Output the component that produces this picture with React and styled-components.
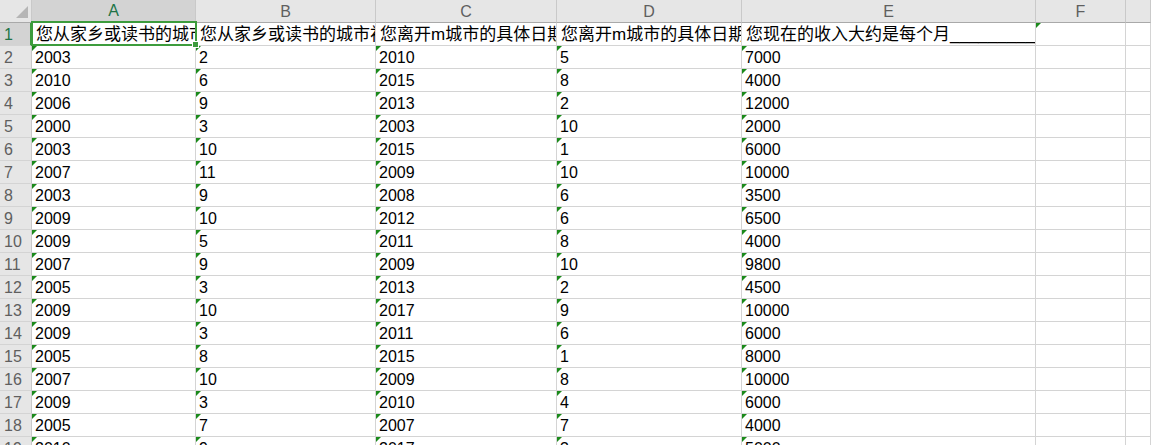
import React from 'react';
import styled, { createGlobalStyle } from 'styled-components';

const GlobalStyle = createGlobalStyle`
    html, body {
        margin: 0;
        padding: 0;
        background: #ffffff;
        overflow: hidden;
    }
    body {
        font-family: "Liberation Sans", Arial, "Noto Sans CJK SC", sans-serif;
    }
`;

const GREEN = '#3d9c3d';
const columns = ['A', 'B', 'C', 'D', 'E', 'F', ''];

const Sheet = styled.div`
    display: grid;
    grid-template-columns: 32px 164px 180px 181px 185px 294px 90px 1fr;
    grid-auto-rows: 23px;
    width: 1151px;
    height: 445px;
    overflow: hidden;
`;

const Corner = styled.div`
    background: #e6e6e6;
    border-right: 1px solid #c9c9c9;
    border-bottom: 1px solid #a9a9a9;
    display: flex;
    align-items: flex-end;
    justify-content: flex-end;
    padding: 0 3px 4px 0;
`;

const ColHead = styled.div`
    background: ${p => p.$active ? '#d3d3d3' : '#e6e6e6'};
    color: ${p => p.$active ? '#217346' : '#5f5f5f'};
    border-right: 1px solid #c9c9c9;
    border-bottom: ${p => p.$active ? `2px solid ${GREEN}` : '1px solid #a9a9a9'};
    font-size: 16px;
    display: flex;
    align-items: center;
    justify-content: center;
    padding-top: 1px;
`;

const RowHead = styled.div`
    background: ${p => p.$active ? '#d3d3d3' : '#e6e6e6'};
    color: ${p => p.$active ? '#217346' : '#5f5f5f'};
    border-right: ${p => p.$active ? `2px solid ${GREEN}` : '1px solid #c9c9c9'};
    border-bottom: 1px solid #d4d4d4;
    font-size: 16px;
    line-height: 22px;
    padding-left: 4px;
    padding-top: 1px;
`;

const Cell = styled.div`
    position: relative;
    border-right: 1px solid #d4d4d4;
    border-bottom: 1px solid #d4d4d4;
    font-size: ${p => p.$title ? '17px' : '16px'};
    line-height: 23px;
    padding-left: ${p => p.$title ? '4px' : '3px'};
    color: #000;
    white-space: nowrap;
    overflow: ${p => p.$selected ? 'visible' : 'hidden'};
    z-index: ${p => p.$selected ? 2 : 0};

    &::before {
        content: '';
        display: ${p => p.$flag ? 'block' : 'none'};
        position: absolute;
        top: 0;
        left: 0;
        border-top: 5px solid #1b8a1b;
        border-right: 5px solid transparent;
    }
`;

const Clip = styled.div`
    overflow: hidden;
    width: 100%;
`;

const Selection = styled.div`
    position: absolute;
    top: -2px;
    left: -1px;
    right: -2px;
    bottom: -1px;
    border: 2px solid ${GREEN};
    pointer-events: none;

    &::after {
        content: '';
        position: absolute;
        right: -4px;
        bottom: -4px;
        width: 5px;
        height: 5px;
        background: ${GREEN};
        border: 1px solid #fff;
    }
`;

const titles = [
    '您从家乡或读书的城市来到m城市的具体日期',
    '您从家乡或读书的城市初次来到m城市的月份',
    '您离开m城市的具体日期（年）',
    '您离开m城市的具体日期（月）',
    '您现在的收入大约是每个月______________',
    '',
    ''
];

const data = [
    ['2003', '2', '2010', '5', '7000'],
    ['2010', '6', '2015', '8', '4000'],
    ['2006', '9', '2013', '2', '12000'],
    ['2000', '3', '2003', '10', '2000'],
    ['2003', '10', '2015', '1', '6000'],
    ['2007', '11', '2009', '10', '10000'],
    ['2003', '9', '2008', '6', '3500'],
    ['2009', '10', '2012', '6', '6500'],
    ['2009', '5', '2011', '8', '4000'],
    ['2007', '9', '2009', '10', '9800'],
    ['2005', '3', '2013', '2', '4500'],
    ['2009', '10', '2017', '9', '10000'],
    ['2009', '3', '2011', '6', '6000'],
    ['2005', '8', '2015', '1', '8000'],
    ['2007', '10', '2009', '8', '10000'],
    ['2009', '3', '2010', '4', '6000'],
    ['2005', '7', '2007', '7', '4000'],
    ['2010', '9', '2017', '3', '5000']
];

function CornerMark() {
    return (
        <svg width="12" height="12" viewBox="0 0 12 12">
            <polygon points="12,0 12,12 0,12" fill="#b5b5b5" />
        </svg>
    );
}

export default function App() {
    return (
        <>
            <GlobalStyle />
            <Sheet>
                <Corner><CornerMark /></Corner>
                {columns.map((c, i) => (
                    <ColHead key={'h' + i} $active={c === 'A'}>{c}</ColHead>
                ))}

                <RowHead $active>1</RowHead>
                {titles.map((t, i) => (
                    <Cell key={'t' + i} $title $selected={i === 0} $flag={i === 5}>
                        {i === 0 ? (
                            <>
                                <Clip>{t}</Clip>
                                <Selection />
                            </>
                        ) : t}
                    </Cell>
                ))}

                {data.map((row, r) => (
                    <React.Fragment key={'r' + r}>
                        <RowHead>{r + 2}</RowHead>
                        {row.map((v, c) => (
                            <Cell key={c} $flag>{v}</Cell>
                        ))}
                        <Cell />
                        <Cell />
                    </React.Fragment>
                ))}
            </Sheet>
        </>
    );
}
